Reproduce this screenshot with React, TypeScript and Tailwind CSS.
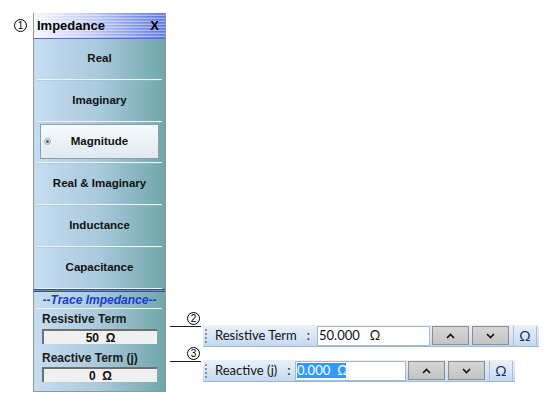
import React from 'react'

const panelFont = { fontFamily: '"Liberation Sans", Arial, sans-serif' }
const barFont = { fontFamily: 'Lato, "Liberation Sans", sans-serif' }

const menuItems = ['Real', 'Imaginary', 'Magnitude', 'Real & Imaginary', 'Inductance', 'Capacitance']

function Callout({ n }: { n: string }) {
  return (
    <span
      className="flex h-[13px] w-[13px] items-center justify-center rounded-full border border-black bg-white text-[10px] leading-none text-black"
      style={{ fontFamily: '"Liberation Sans", Arial, sans-serif' }}
    >
      {n}
    </span>
  )
}

function Chevron({ up }: { up?: boolean }) {
  return (
    <svg width="9" height="6" viewBox="0 0 9 6">
      <path d={up ? 'M1 5 L4.5 1.5 L8 5' : 'M1 1 L4.5 4.5 L8 1'} fill="none" stroke="#111" strokeWidth="1.6" />
    </svg>
  )
}

function ToolButtons() {
  return (
    <div className="flex items-center">
      <button className="flex h-[19px] w-[37px] items-center justify-center border border-[#8d8d8d] bg-gradient-to-b from-[#d6d6d6] to-[#c4c4c4]">
        <Chevron up />
      </button>
      <button className="ml-[3px] flex h-[19px] w-[37px] items-center justify-center border border-[#8d8d8d] bg-gradient-to-b from-[#d6d6d6] to-[#c4c4c4]">
        <Chevron />
      </button>
      <button className="ml-[4px] flex h-[20px] w-[24px] items-center justify-center border-l border-r border-[#a8bddb] text-[14px] text-[#1a2a5a]">
        Ω
      </button>
    </div>
  )
}

function Toolbar({
  label,
  width,
  labelWidth,
  inputWidth,
  children,
}: {
  label: string
  width: string
  labelWidth: string
  inputWidth: string
  children: React.ReactNode
}) {
  return (
    <div
      className={`flex h-[22px] items-center border-b border-[#9fb5d4] bg-gradient-to-b from-[#e9f0fa] via-[#d9e6f6] to-[#c4d8f0] ${width}`}
      style={barFont}
    >
      <span className="ml-[2px] h-[14px] w-0 border-l-2 border-dotted border-[#8494ab]" />
      <span className={`ml-[8px] flex items-center text-[13px] text-[#111] ${labelWidth}`}>
        {label}
        <span className="ml-[10px]">:</span>
      </span>
      <div className={`flex h-[20px] items-center border border-[#a9b9cc] bg-white ${inputWidth}`}>{children}</div>
      <div className="ml-[2px]">
        <ToolButtons />
      </div>
    </div>
  )
}

export default function App() {
  return (
    <div className="relative flex h-[411px] w-[553px] items-start overflow-hidden bg-white pl-[14px] pt-[13px]" style={panelFont}>
      <div className="mr-[6px] mt-[6px]">
        <Callout n="1" />
      </div>

      {/* side panel */}
      <div className="flex w-[133px] flex-col border-x border-b border-[#8a9aa0] bg-gradient-to-r from-[#c6ddf1] via-[#a9c9dc] to-[#6fa7ab]">
        <div className="flex h-[26px] items-center justify-between border-b border-[#5a70c8] bg-[linear-gradient(to_right,rgba(255,255,255,0.95),rgba(255,255,255,0.6)_45%,rgba(255,255,255,0)),repeating-linear-gradient(to_bottom,#5a74e0_0px,#5a74e0_1px,#8a9ef0_2px,#b5c3f6_3px)] px-[3px]">
          <span className="text-[13px] font-bold text-black">Impedance</span>
          <span className="mr-[3px] text-[13px] font-bold text-black">X</span>
        </div>

        {menuItems.map((item, i) => (
          <div key={item} className="flex flex-col">
            {i > 0 && <div className="mx-[3px] h-[2px] border-t border-[#eef4f8] bg-[#9bb9c8]/40" />}
            {item === 'Magnitude' ? (
              <div className="flex h-[39px] flex-col px-[6px] pt-[1px]">
                <div className="relative flex h-[35px] w-full items-center justify-center border border-[#8e9ea4] bg-gradient-to-b from-[#f7fafc] to-[#dfe9ee] text-[11.5px] font-bold text-[#111]">
                  <span className="absolute left-[3px] top-[13px] flex h-[7px] w-[7px] items-center justify-center rounded-full border border-[#9aa8b0] bg-[#e4ecf0]">
                    <span className="h-[3px] w-[3px] rounded-full bg-[#2f5f8a]" />
                  </span>
                  {item}
                </div>
              </div>
            ) : (
              <div className={`flex items-center justify-center text-[11.5px] font-bold text-[#111] ${i === 0 ? 'h-[40px]' : 'h-[40px]'}`}>
                {item}
              </div>
            )}
          </div>
        ))}

        <div className="mx-[3px] h-[1px] bg-[#eef4f8]" />
        <div className="h-[3px] border-y border-[#2f4f8f] bg-[#6f8fb8]" />
        <div className="flex h-[16px] items-center justify-center text-[12px] font-bold italic text-[#1a3bd6]">
          --Trace Impedance--
        </div>
        <div className="mx-[3px] h-[1px] bg-[#eef4f8]" />

        <div className="px-[8px] pb-[9px] pt-[3px]">
          <div className="text-[12px] font-bold leading-[14px] text-[#1a1a1a]">Resistive Term</div>
          <div className="mt-[3px] flex h-[15px] items-center justify-center border-l-2 border-t-2 border-[#707070] bg-[#f0f0f0] text-[12px] font-bold text-[#111]">
            50&nbsp;&nbsp;Ω
          </div>
          <div className="mt-[7px] text-[12px] font-bold leading-[14px] text-[#1a1a1a]">Reactive Term (j)</div>
          <div className="mt-[2px] flex h-[15px] items-center justify-center border-l-2 border-t-2 border-[#707070] bg-[#f0f0f0] text-[12px] font-bold text-[#111]">
            0&nbsp;&nbsp;Ω
          </div>
        </div>
      </div>

      {/* toolbars */}
      <div className="ml-[37px] mt-[312px] flex flex-col gap-[13px]">
        <div className="relative">
          <div className="absolute -left-[33px] top-[1px] w-[31px] border-t border-[#222]" />
          <div className="absolute -left-[16px] -top-[13px]">
            <Callout n="2" />
          </div>
          <Toolbar label="Resistive Term" width="w-[336px]" labelWidth="w-[102px]" inputWidth="w-[113px]">
            <span className="ml-[1px] text-[13px] text-[#111]">50.000</span>
            <span className="ml-[10px] text-[13px] text-[#111]">Ω</span>
          </Toolbar>
        </div>
        <div className="relative">
          <div className="absolute -left-[33px] top-[1px] w-[31px] border-t border-[#222]" />
          <div className="absolute -left-[16px] -top-[13px]">
            <Callout n="3" />
          </div>
          <Toolbar label="Reactive (j)" width="w-[312px]" labelWidth="w-[80px]" inputWidth="w-[111px]">
            <span className="ml-[1px] flex h-[15px] w-[49px] items-center bg-[#3399ff] text-[13px] text-white">
              0.000<span className="ml-[7px]">Ω</span>
            </span>
          </Toolbar>
        </div>
      </div>
    </div>
  )
}
